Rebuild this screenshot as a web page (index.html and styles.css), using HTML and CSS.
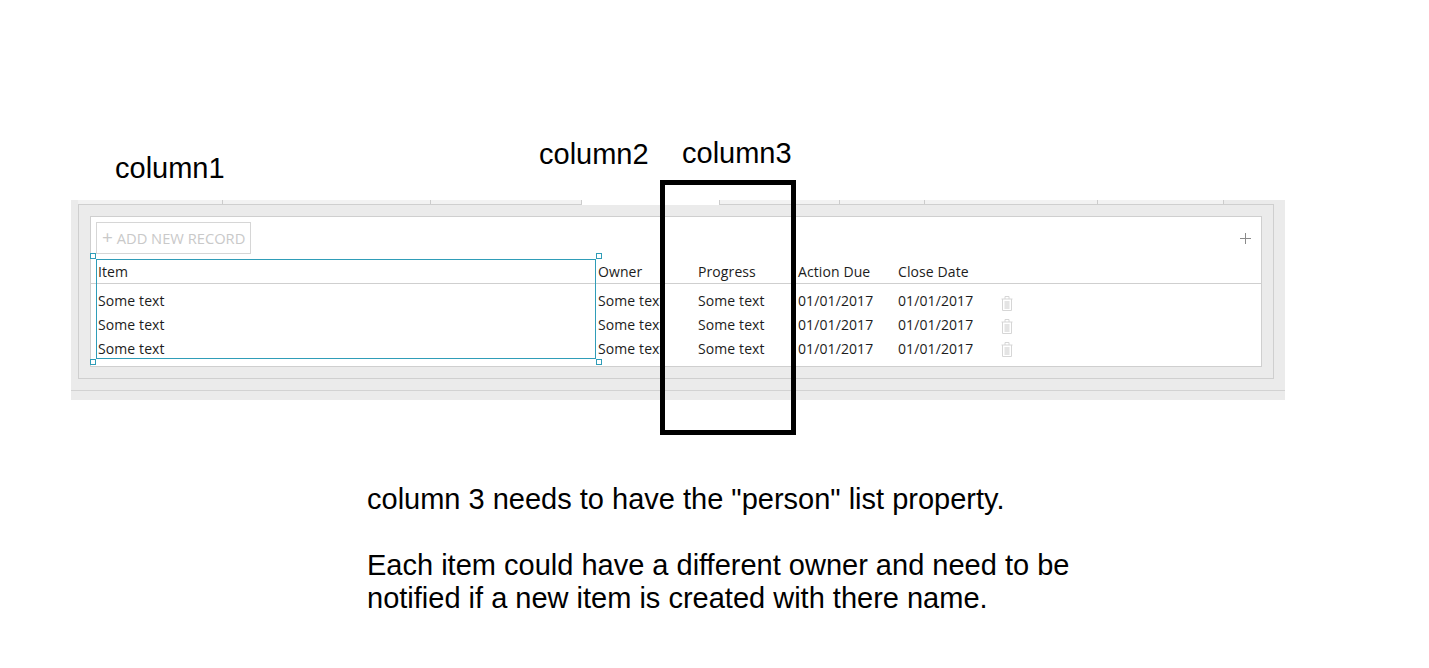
FILE: index.html
```html
<!DOCTYPE html>
<html lang="en">
<head>
<meta charset="utf-8">
<title>Column property request</title>
<link rel="stylesheet" href="styles.css">
</head>
<body>
<div class="panel">
  <div class="tabs">
    <span class="tab t1"></span><span class="tab t2"></span><span class="tab t3"></span>
    <span class="tab active t4"></span>
    <span class="tab t5"></span><span class="tab t6"></span><span class="tab t7"></span><span class="tab t8"></span>
  </div>
  <div class="inner">
    <div class="card">
      <div class="toolbar">
        <div class="add-btn"><span class="add-plus">+</span> ADD NEW RECORD</div>
        <svg class="plus" viewBox="0 0 11 11" aria-hidden="true"><path d="M5.5 0v11M0 5.5h11"/></svg>
      </div>
      <div class="grid head">
        <span>Item</span><span>Owner</span><span>Progress</span><span>Action Due</span><span>Close Date</span>
      </div>
      <div class="body-rows">
        <div class="rows">
          <div class="grid row"><span>Some text</span><span>Some text</span><span>Some text</span><span>01/01/2017</span><span>01/01/2017</span></div>
          <div class="grid row"><span>Some text</span><span>Some text</span><span>Some text</span><span>01/01/2017</span><span>01/01/2017</span></div>
          <div class="grid row"><span>Some text</span><span>Some text</span><span>Some text</span><span>01/01/2017</span><span>01/01/2017</span></div>
        </div>
        <div class="trashes">
          <svg class="trash" viewBox="0 0 12 15" aria-hidden="true"><path class="tl" d="M.5 3h11M4 3V.5h4V3M1.5 3v11.5h9V3"/><rect class="tf" x="3.5" y="5" width="5" height="8"/></svg>
          <svg class="trash" viewBox="0 0 12 15" aria-hidden="true"><path class="tl" d="M.5 3h11M4 3V.5h4V3M1.5 3v11.5h9V3"/><rect class="tf" x="3.5" y="5" width="5" height="8"/></svg>
          <svg class="trash" viewBox="0 0 12 15" aria-hidden="true"><path class="tl" d="M.5 3h11M4 3V.5h4V3M1.5 3v11.5h9V3"/><rect class="tf" x="3.5" y="5" width="5" height="8"/></svg>
        </div>
      </div>
      <div class="selection">
        <i class="handle nw"></i><i class="handle ne"></i><i class="handle sw"></i><i class="handle se"></i>
      </div>
    </div>
  </div>
  <div class="panel-foot"></div>
</div>

<div class="label l1">column1</div>
<div class="label l2">column2</div>
<div class="label l3">column3</div>
<div class="blackbox"></div>

<div class="note">
  <p>column 3 needs to have the "person" list property.</p>
  <p>Each item could have a different owner and need to be<br>notified if a new item is created with there name.</p>
</div>
</body>
</html>
```
FILE: styles.css
```css
* { box-sizing: border-box; }
html, body { margin: 0; background: #fff; }
body { width: 1429px; height: 668px; overflow: hidden; position: relative; padding-top: 200px; font-family: "Liberation Sans", Arial, sans-serif; }

.panel { width: 1214px; height: 200px; margin-left: 71px; background: #ebebeb; padding: 0 11px 0 7px; }
.tabs { display: flex; height: 4px; width: 1146px; }
.tab { background: #f2f2f2; border-right: 1px solid #ccc; }
.tab.active { background: #fff; height: 5px; }
.t1 { width: 145px; } .t2 { width: 208px; } .t3 { width: 151px; } .t4 { width: 138px; }
.t5 { width: 120px; } .t6 { width: 85px; } .t7 { width: 173px; } .t8 { width: 126px; }

.inner { height: 175px; border: 1px solid #cfcfcf; padding: 11px; }
.card { position: relative; height: 151px; background: #fff; border: 1px solid #cfcfcf; font-family: "Open Sans", "Noto Sans", sans-serif; font-size: 14px; letter-spacing: .1px; color: #1c1c1c; }

.toolbar { height: 42px; padding: 5px 10px 0 5px; display: flex; justify-content: space-between; align-items: flex-start; }
.add-btn { width: 155px; height: 32px; border: 1px solid #d6d6d6; color: #c9c9c9; font-size: 14.7px; line-height: 30px; padding-left: 5px; white-space: nowrap; letter-spacing: 0; }
.add-plus { font-size: 19px; line-height: 1; }
.plus { width: 11px; height: 11px; margin-top: 11px; }
.plus path { stroke: #8a8a8a; stroke-width: 1; fill: none; }

.grid { display: grid; grid-template-columns: 500px 100px 100px 100px 100px; padding-left: 7px; white-space: nowrap; }
.head { height: 25px; line-height: 25px; border-bottom: 1px solid #cfcfcf; }
.body-rows { display: flex; padding-top: 5px; }
.rows { width: 910px; }
.row { height: 24px; line-height: 24px; }
.trashes { display: flex; flex-direction: column; gap: 8px; margin-top: 7px; }
.trash { width: 12px; height: 15px; display: block; }
.tl { fill: none; stroke: #d6d6d6; stroke-width: 1; }
.tf { fill: #e4e4e4; }

.selection { position: absolute; left: 5px; top: 42px; width: 500px; height: 100px; border: 1px solid #2f9db8; pointer-events: none; }
.handle { position: absolute; width: 6px; height: 6px; background: #fff; border: 1px solid #2f9db8; }
.nw { left: -7px; top: -7px; } .ne { right: -7px; top: -7px; }
.sw { left: -7px; bottom: -7px; } .se { right: -7px; bottom: -7px; }

.panel-foot { height: 21px; margin: 11px -11px 0 -7px; border-top: 1px solid #d2d2d2; }

.label { position: absolute; font-size: 29px; line-height: 33px; color: #000; }
.l1 { left: 115px; top: 152px; }
.l2 { left: 539px; top: 138px; }
.l3 { left: 682px; top: 137px; }
.blackbox { position: absolute; left: 660px; top: 180px; width: 136px; height: 255px; border: 5px solid #000; }

.note { margin: 83px 0 0 367px; font-size: 29px; line-height: 33px; color: #000; }
.note p { margin: 0 0 33px; }
```
